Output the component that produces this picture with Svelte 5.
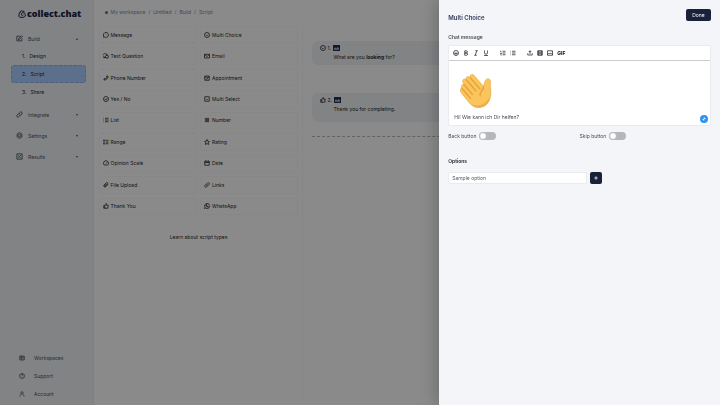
<script lang="ts">
	const icons: Record<string, string> = {
		edit: 'M20 12v8H3V4h10M8 16l2-5L19 2l3 3-9 9z',
		link: 'M10 14a5 5 0 0 0 7 0l3-4a4 4 0 0 0-6-6l-2 2M14 10a5 5 0 0 0-7 0l-3 4a4 4 0 0 0 6 6l2-2',
		gear: 'M12 2l8 5v10l-8 5-8-5V7zM12 8a4 4 0 1 0 0 8 4 4 0 0 0 0-8z',
		results: 'M3 3h18v18H3zM8 8v3M16 7l-8 10M16 14v3',
		workspaces: 'M3 4h18v16H3zM3 9h18M9 4v16M13 13h4M13 17h4',
		help: 'M12 2a10 10 0 1 0 0 20 10 10 0 0 0 0-20zM9 9a3 3 0 1 1 4 3l-1 2M12 17v1',
		user: 'M12 3a5 5 0 1 0 0 10 5 5 0 0 0 0-10zM3 22l2-5 4-3M21 22l-2-5-4-3',
		message: 'M12 2a10 10 0 1 1-6 18l-4 1 1-4A10 10 0 0 1 12 2zM8 12h1M12 12h1M16 12h1',
		choice: 'M12 2a10 10 0 1 0 0 20 10 10 0 0 0 0-20zM8 11l4 4 4-4',
		question: 'M10 3a8 8 0 1 0 0 15H3l2-3M10 3a8 8 0 0 1 8 7M16 9a6 6 0 1 1 0 12 6 6 0 0 1 0-12z',
		email: 'M2 5h20v15H2zM2 6l10 8 10-8',
		phone: 'M15 4h5c1 9-7 17-16 16v-5l5-2 2 2c2-1 4-3 5-5l-2-2z',
		calendar: 'M3 4h18v17H3zM3 9h18M7 16l3 2 6-6',
		check: 'M12 2a10 10 0 1 0 0 20 10 10 0 0 0 0-20zM7 12l4 4 6-7',
		select: 'M3 3h18v18H3zM8 11l4 4 4-4',
		list: 'M8 5h14M8 12h14M8 19h14M2 5h2M2 12h2M2 19h2',
		number: 'M8 3v18M16 3v18M3 8h18M3 16h18',
		range: 'M10 5h12M10 12h12M10 19h12M4 3v18M2 6l2-3 2 3M2 18l2 3 2-3',
		star: 'M12 2l3 7 7 1-5 5 1 7-6-4-6 4 1-7-5-5 7-1z',
		scale: 'M5 20a10 10 0 1 1 14 0zM12 14l4-5',
		date: 'M3 5h18v16H3zM3 10h18M7 2v4M17 2v4',
		clip: 'M20 9l-9 10a5 5 0 0 1-7-7l9-9a3 3 0 0 1 5 5l-9 9a1 1 0 0 1-2-2l8-8',
		thumb: 'M3 10h4v11H3zM7 10l5-8c3 0 3 3 2 7h7l-2 12H7',
		whatsapp: 'M12 2a10 10 0 1 1-5 18l-5 2 2-5A10 10 0 0 1 12 2zM8 7c0 5 4 9 9 9v-3l-3-1-1 1-3-3 1-1-1-3z',
		smile: 'M12 2a10 10 0 1 0 0 20 10 10 0 0 0 0-20zM7 13c1 5 9 5 10 0zM8 8v1M16 8v1',
		bold: 'M7 3h6a4 4 0 0 1 0 9H7zM7 12h7a4 4 0 0 1 0 9H7z',
		italic: 'M9 3h10M5 21h10M15 3L9 21',
		underline: 'M6 2v9a6 6 0 0 0 12 0V2M4 22h16',
		ordered: 'M10 5h12M10 12h12M10 19h12M3 3v5M2 12h4l-4 4h4M2 20h4',
		upload: 'M12 16V3M7 8l5-5 5 5M3 13v7h18v-7',
		film: 'M3 3h18v18H3zM8 3v18M16 3v18M3 12h18M3 7h5M3 17h5M16 7h5M16 17h5',
		image: 'M2 3h20v18H2zM3 18l6-6 4 4 3-3 5 5M15 8h2',
		plus: 'M12 5v14M5 12h14',
		resize: 'M8 16l8-8M11 8h5v5M8 11v5h5'
	};

	const steps = ['Design', 'Script', 'Share'];
	const sections = [
		{ icon: 'link', label: 'Integrate' },
		{ icon: 'gear', label: 'Settings' },
		{ icon: 'results', label: 'Results' }
	];
	const footer = [
		{ icon: 'workspaces', label: 'Workspaces' },
		{ icon: 'help', label: 'Support' },
		{ icon: 'user', label: 'Account' }
	];
	const blocks = [
		['message', 'Message'],
		['choice', 'Multi Choice'],
		['question', 'Text Question'],
		['email', 'Email'],
		['phone', 'Phone Number'],
		['calendar', 'Appointment'],
		['check', 'Yes / No'],
		['select', 'Multi Select'],
		['list', 'List'],
		['number', 'Number'],
		['range', 'Range'],
		['star', 'Rating'],
		['scale', 'Opinion Scale'],
		['date', 'Date'],
		['clip', 'File Upload'],
		['link', 'Links'],
		['thumb', 'Thank You'],
		['whatsapp', 'WhatsApp']
	];
	const tools = [
		['smile', 'bold', 'italic', 'underline'],
		['ordered', 'list'],
		['upload', 'film', 'image']
	];

	let active = $state('Script');
	let back = $state(false);
	let skip = $state(false);
	let option = $state('');
</script>

{#snippet icon(name: string)}
	<svg class="icon" viewBox="0 0 24 24" aria-hidden="true"><path d={icons[name]} /></svg>
{/snippet}

{#snippet media()}
	<svg class="media" viewBox="0 0 24 20" aria-hidden="true">
		<path d="M0 0h24v20H0z" />
		<path class="hill" d="M3 16v-5l4-4 4 5 5-6 5 6v4z" />
	</svg>
{/snippet}

<div class="app">
	<nav class="sidebar">
		<a class="logo" href="#home">
			<svg viewBox="0 0 24 24" aria-hidden="true">
				<path d="M3 10v8c0 3 2 4 5 4h7c4 0 7-3 7-7s-3-7-7-7-5 2-5 5 3 4 6 2M3 10l4-3M7 8V4l4-2 3 2 3-1 2 4" />
			</svg>
			<span>collect.chat</span>
		</a>

		<button class="section">{@render icon('edit')}<span>Build</span><i class="caret up"></i></button>
		<div class="steps">
			{#each steps as step, i}
				<button class="step" class:active={active === step} onclick={() => (active = step)}>
					<span>{i + 1}.</span>{step}
				</button>
			{/each}
		</div>
		{#each sections as s}
			<button class="section">{@render icon(s.icon)}<span>{s.label}</span><i class="caret"></i></button>
		{/each}

		<div class="bottom">
			{#each footer as f}
				<a href="#{f.icon}">{@render icon(f.icon)}{f.label}</a>
			{/each}
		</div>
	</nav>

	<section class="palette">
		<div class="crumbs">
			<i></i><a href="#workspace">My workspace</a><span>/</span><a href="#bot">Untitled</a><span>/</span><a
				href="#build">Build</a
			><span>/</span><a href="#script">Script</a>
		</div>
		<div class="blocks">
			{#each blocks as [name, label]}
				<button class="block">{@render icon(name)}{label}</button>
			{/each}
		</div>
		<a class="learn" href="#types">Learn about script types</a>
	</section>

	<main class="script">
		<article class="question">
			<header>{@render icon('choice')}1. {@render media()}</header>
			<p>What are you <b>looking</b> for?</p>
		</article>
		<article class="question last">
			<header>{@render icon('thumb')}2. {@render media()}</header>
			<p>Thank you for completing.</p>
		</article>
		<hr />
	</main>
</div>

<div class="backdrop">
	<aside class="drawer">
		<header class="top">
			<h1>Multi Choice</h1>
			<button class="done">Done</button>
		</header>

		<h2>Chat message</h2>
		<div class="editor">
			<div class="toolbar">
				{#each tools as group}
					<div class="group">
						{#each group as tool}
							<button aria-label={tool}>{@render icon(tool)}</button>
						{/each}
						{#if group.includes('film')}<button class="gif">GIF</button>{/if}
					</div>
				{/each}
			</div>
			<div class="content">
				<svg class="hand" viewBox="0 0 64 72" aria-label="Waving hand" role="img">
					<path
						fill="#fbc55d"
						stroke="#e9a83d"
						stroke-width="1.5"
						d="M4 30c-3-3 0-8 4-7l-2-5c-2-5 3-8 7-4-3-6 3-9 7-5l1 1c-3-6 4-10 8-4l18 21 3-10c1-7 11-7 11 0-2 10 2 20 0 30-3 14-12 22-24 22-10 0-17-7-23-15L3 40c-4-5-3-9 1-10z"
					/>
					<path
						fill="none"
						stroke="#e6a237"
						stroke-width="2.5"
						stroke-linecap="round"
						d="M8 23l17 20M13 14l19 22M21 10l19 22M4 31l17 20M47 27c1 7-8 9-7 19"
					/>
					<path fill="#eeb046" d="M21 62c16 7 30 1 39-15-2 15-10 22-23 22-7 0-12-3-16-7z" />
				</svg>
				<p>Hi! Wie kann ich Dir helfen?</p>
				<button class="expand" aria-label="Expand">{@render icon('resize')}</button>
			</div>
		</div>

		<div class="toggles">
			<label>Back button <input type="checkbox" role="switch" bind:checked={back} /></label>
			<label>Skip button <input type="checkbox" role="switch" bind:checked={skip} /></label>
		</div>

		<h2 class="options">Options</h2>
		<form class="add" onsubmit={(e) => e.preventDefault()}>
			<input type="text" aria-label="Option" placeholder="Sample option" bind:value={option} />
			<button aria-label="Add option">{@render icon('plus')}</button>
		</form>
	</aside>
</div>

<style>
	:global(body) {
		margin: 0;
		font-family: Inter, 'Liberation Sans', sans-serif;
		font-size: 5px;
		line-height: 8px;
		color: #1c1f26;
	}

	button,
	input {
		font: inherit;
		color: inherit;
		margin: 0;
		padding: 0;
		border: 0;
		background: none;
		box-sizing: border-box;
	}

	a {
		color: inherit;
		text-decoration: none;
	}

	h1,
	h2,
	p {
		margin: 0;
	}

	.icon {
		width: 6px;
		height: 6px;
		flex: none;
		fill: none;
		stroke: currentColor;
		stroke-width: 3;
	}

	.app {
		display: flex;
		min-height: 100vh;
		background: #fcfcfc;
	}

	.sidebar {
		display: flex;
		flex-direction: column;
		box-sizing: border-box;
		width: 13%;
		padding: 8px 7px 2px 11px;
		background: #eceff3;
		border-right: 1px solid #e6eaf1;
		color: #4b515c;
	}

	.logo {
		display: flex;
		align-items: center;
		gap: 1px;
		height: 12px;
		margin: 0 0 10px 7px;
		font-family: 'Open Sans', sans-serif;
		font-size: 9px;
		font-weight: 800;
		color: #1b2547;
	}

	.logo svg {
		flex: none;
		width: 8px;
		height: 8px;
		fill: none;
		stroke: currentColor;
		stroke-width: 3;
	}

	.section {
		display: flex;
		align-items: center;
		gap: 6px;
		height: 17px;
		margin-bottom: 4px;
		padding: 0 8px 0 5px;
		text-align: left;
	}

	.section span {
		flex: 1;
	}

	.section .icon {
		width: 7px;
		height: 7px;
		margin-right: -1px;
	}

	.steps + .section {
		margin-top: 5px;
	}

	.logo + .section {
		margin-bottom: 0;
	}

	.caret {
		border: 1px solid transparent;
		border-top: 2px solid currentColor;
		border-bottom: 0;
	}

	.caret.up {
		border-top: 0;
		border-bottom: 2px solid currentColor;
	}

	.steps {
		display: flex;
		flex-direction: column;
	}

	.step {
		display: flex;
		gap: 4px;
		align-items: center;
		height: 18px;
		padding-left: 10px;
		border: 1px dashed transparent;
		border-radius: 3px;
		color: #1c1f26;
	}

	.step.active {
		background: #a8ccff;
		border-color: #90aedd;
	}

	.bottom {
		display: flex;
		flex-direction: column;
		margin-top: auto;
	}

	.bottom a {
		display: flex;
		align-items: center;
		gap: 9px;
		height: 18px;
		padding-left: 8px;
	}

	.palette {
		display: flex;
		flex-direction: column;
		box-sizing: border-box;
		width: 29%;
		padding: 8px 4px 0 5px;
	}

	.crumbs {
		display: flex;
		align-items: center;
		gap: 3px;
		height: 8px;
		margin-bottom: 10px;
		padding-left: 6px;
		color: #80858f;
	}

	.crumbs i {
		width: 3px;
		height: 3px;
		border-radius: 50%;
		background: #636873;
	}

	.blocks {
		display: grid;
		grid-template-columns: 1fr 1fr;
		gap: 4px 3px;
		min-height: 189px;
	}

	.block {
		display: flex;
		align-items: center;
		gap: 2px;
		padding: 0 3px;
		border: 1px solid #f6f6f8;
		border-radius: 2px;
		text-align: left;
	}

	.learn {
		margin-top: 18px;
		text-align: center;
	}

	.script {
		flex: 1;
		margin: 26px 0 5px;
		padding: 15px 9px 0;
		border-left: 1px solid #f4f4f6;
	}

	.question {
		padding: 3px 8px 4px;
		border-radius: 6px;
		background: #eceff3;
	}

	.question + .question {
		margin-top: 28px;
	}

	.question header {
		display: flex;
		align-items: center;
		gap: 1px;
		height: 8px;
	}

	.question p {
		padding: 1px 0 0 13px;
	}

	.question.last {
		padding-bottom: 9px;
	}

	.media {
		width: 7px;
		height: 6px;
		margin-left: 1px;
		fill: #1b2547;
	}

	.media .hill {
		fill: #aab4cc;
	}

	hr {
		margin: 14px 0 0;
		border: 0;
		border-top: 1px dashed #b4b4b4;
	}

	.backdrop {
		position: fixed;
		inset: 0;
		display: flex;
		justify-content: flex-end;
		background: rgba(0, 0, 0, 0.45);
	}

	.drawer {
		box-sizing: border-box;
		width: 39%;
		padding: 9px;
		overflow: auto;
		background: #f3f5f9;
		box-shadow: -2px 0 16px rgba(0, 0, 0, 0.25);
		color: #4a4d55;
	}

	.top {
		display: flex;
		justify-content: space-between;
		height: 24px;
	}

	h1 {
		padding-top: 4px;
		font-size: 6px;
		line-height: 9px;
		font-weight: 600;
		color: #343a58;
	}

	.done {
		width: 25px;
		height: 12px;
		border-radius: 2px;
		background: #19213b;
		color: #fff;
	}

	h2 {
		font-size: 5px;
		line-height: 8px;
		font-weight: 600;
	}

	.editor {
		margin: 4px 0 5px;
		border: 1px solid #e9ebef;
		border-radius: 2px;
		background: #fff;
	}

	.toolbar {
		display: flex;
		gap: 11px;
		height: 14px;
		padding-left: 4px;
		border-bottom: 1px solid #ccc;
		color: #24272e;
	}

	.group {
		display: flex;
		align-items: center;
		gap: 4px;
	}

	.group button {
		display: flex;
	}

	.group .gif {
		font-weight: 800;
	}

	.content {
		position: relative;
		padding: 11px 5px 4px;
	}

	.hand {
		display: block;
		width: 32px;
		height: 38px;
		margin: 0 0 3px 6px;
	}

	.expand {
		position: absolute;
		right: 2px;
		bottom: 2px;
		display: grid;
		place-items: center;
		width: 8px;
		height: 8px;
		border-radius: 50%;
		background: #2a94f4;
		color: #fff;
	}

	.toggles {
		display: grid;
		grid-template-columns: 1fr 1fr;
	}

	.toggles label {
		display: flex;
		align-items: center;
		gap: 3px;
		height: 10px;
	}

	.toggles input {
		appearance: none;
		width: 17px;
		height: 8px;
		border-radius: 4px;
		background: #b5b5ba;
	}

	.toggles input::before {
		content: '';
		display: block;
		box-sizing: border-box;
		width: 8px;
		height: 8px;
		border: 1px solid #b5b5ba;
		border-radius: 50%;
		background: #fff;
	}

	.toggles input:checked::before {
		margin-left: auto;
	}

	.options {
		margin: 16px 0 7px;
		color: #23262e;
	}

	.add {
		display: flex;
		align-items: center;
		gap: 3px;
	}

	.add input {
		width: 53%;
		height: 12px;
		padding: 0 3px;
		border: 1px solid #e9ebef;
		border-radius: 2px;
		background: #fff;
	}

	.add input::placeholder {
		color: #5d6068;
	}

	.add button {
		display: grid;
		place-items: center;
		width: 12px;
		height: 12px;
		border-radius: 2px;
		background: #19213b;
		color: #fff;
	}
</style>
